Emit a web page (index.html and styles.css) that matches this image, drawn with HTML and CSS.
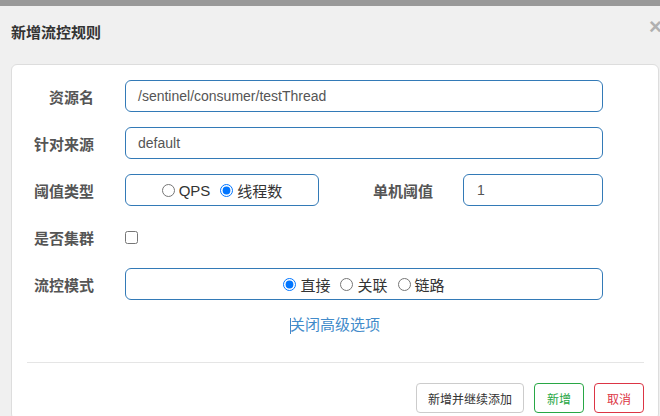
FILE: index.html
```html
<!DOCTYPE html>
<html>
<head>
<meta charset="utf-8">
<link rel="stylesheet" href="styles.css">
</head>
<body>
<div class="topbar"></div>
<div class="modal">
  <div class="header">
    <h4 class="title">新增流控规则</h4>
    <span class="close">×</span>
  </div>
  <div class="panel">
    <div class="row">
      <label class="label">资源名</label>
      <div class="field wide">/sentinel/consumer/testThread</div>
    </div>
    <div class="row">
      <label class="label">针对来源</label>
      <div class="field wide">default</div>
    </div>
    <div class="row">
      <label class="label">阈值类型</label>
      <div class="field group small">
        <label class="opt"><input type="radio" name="t">QPS</label>
        <label class="opt"><input type="radio" name="t" checked>线程数</label>
      </div>
      <label class="label2">单机阈值</label>
      <div class="field num">1</div>
    </div>
    <div class="row">
      <label class="label">是否集群</label>
      <input class="check" type="checkbox">
    </div>
    <div class="row">
      <label class="label">流控模式</label>
      <div class="field group wide">
        <label class="opt"><input type="radio" name="m" checked>直接</label>
        <label class="opt"><input type="radio" name="m">关联</label>
        <label class="opt"><input type="radio" name="m">链路</label>
      </div>
    </div>
    <div class="linkrow"><a class="link"><span class="caret"></span>关闭高级选项</a></div>
    <div class="divider"></div>
    <div class="footer">
      <button class="btn">新增并继续添加</button>
      <button class="btn green">新增</button>
      <button class="btn red">取消</button>
    </div>
  </div>
</div>
</body>
</html>
```
FILE: styles.css
```css
html, body {
  margin: 0;
  padding: 0;
  height: 100%;
  overflow: hidden;
}
body {
  background: #f0f0f0;
  font-family: "Liberation Sans", Arial, "Noto Sans CJK SC", sans-serif;
  font-size: 14px;
  color: #333;
}
.topbar {
  height: 6px;
  background: #999;
}
.header {
  position: relative;
  height: 58px;
  padding-left: 11px;
}
.title {
  margin: 0;
  padding-top: 17px;
  font-size: 15px;
  font-weight: bold;
  color: #333;
  line-height: 20px;
}
.close {
  position: absolute;
  left: 649px;
  top: 8px;
  font-size: 22px;
  font-weight: bold;
  color: #b0b0b0;
}
.panel {
  box-sizing: border-box;
  margin-left: 11px;
  margin-right: 1px;
  background: #fff;
  border: 1px solid #ddd;
  border-radius: 6px;
  padding: 15px 0 0 0;
  height: 356px;
}
.row {
  display: flex;
  align-items: center;
  height: 32px;
  margin-bottom: 15px;
}
.label {
  width: 82px;
  text-align: right;
  font-weight: bold;
  color: #555;
  margin-right: 31px;
  font-size: 15px;
}
.label2 {
  width: 114px;
  text-align: right;
  font-weight: bold;
  color: #555;
  margin-right: 30px;
  font-size: 15px;
}
.field {
  box-sizing: border-box;
  height: 32px;
  border: 1px solid #337ab7;
  border-radius: 6px;
  padding: 0 12px;
  display: flex;
  align-items: center;
  color: #555;
}
.wide { width: 478px; }
.small { width: 194px; }
.num { width: 140px; padding-left: 13px; }
.group {
  justify-content: center;
  gap: 10px;
}
.opt {
  display: flex;
  align-items: center;
  color: #333;
  font-size: 15px;
}
.opt input {
  margin: 0 4px 0 0;
  width: 13px;
  height: 13px;
}
.check {
  margin: 0;
  width: 13px;
  height: 13px;
}
.linkrow {
  text-align: center;
  height: 20px;
  line-height: 20px;
}
.link {
  color: #428bca;
  position: relative;
  font-size: 15px;
}
.caret {
  position: absolute;
  left: 0;
  top: 2px;
  width: 1px;
  height: 16px;
  background: #428bca;
}
.divider {
  margin: 27px 14px 0 15px;
  border-top: 1px solid #e5e5e5;
}
.footer {
  display: flex;
  justify-content: flex-end;
  gap: 10px;
  padding: 20px 14px 0 0;
}
.btn {
  font-family: "Liberation Sans", Arial, "Noto Sans CJK SC", sans-serif;
  font-size: 12px;
  height: 30px;
  padding: 0 11px;
  background: #fff;
  border: 1px solid #ccc;
  border-radius: 4px;
  color: #333;
}
.green {
  border-color: #28a745;
  color: #28a745;
  width: 50px;
  padding: 0;
}
.red {
  border-color: #dc3545;
  color: #dc3545;
  width: 50px;
  padding: 0;
}
```
